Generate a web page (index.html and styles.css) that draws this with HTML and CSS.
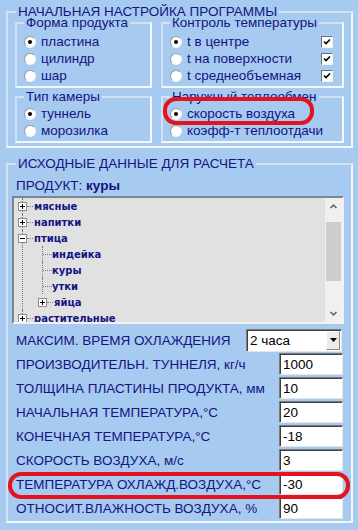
FILE: index.html
```html
<!DOCTYPE html>
<html lang="ru">
<head>
    <meta charset="UTF-8">
    <title>Настройка программы</title>
    <link rel="stylesheet" href="styles.css">
</head>
<body>
<div class="window">

    <fieldset class="group outer">
        <legend>НАЧАЛЬНАЯ НАСТРОЙКА ПРОГРАММЫ</legend>
        <div class="grid">
            <fieldset class="group inner">
                <legend>Форма продукта</legend>
                <div class="opt"><span class="radio on"></span>пластина</div>
                <div class="opt"><span class="radio"></span>цилиндр</div>
                <div class="opt"><span class="radio"></span>шар</div>
            </fieldset>
            <fieldset class="group inner">
                <legend>Контроль температуры</legend>
                <div class="opt"><span class="radio on"></span>t в центре<span class="check"><svg width="8" height="8" viewBox="0 0 8 8"><path d="M1 3.5 L3 5.5 L7 1.5" fill="none" stroke="#000" stroke-width="1.6"/></svg></span></div>
                <div class="opt"><span class="radio"></span>t на поверхности<span class="check"><svg width="8" height="8" viewBox="0 0 8 8"><path d="M1 3.5 L3 5.5 L7 1.5" fill="none" stroke="#000" stroke-width="1.6"/></svg></span></div>
                <div class="opt"><span class="radio"></span>t среднеобъемная<span class="check"><svg width="8" height="8" viewBox="0 0 8 8"><path d="M1 3.5 L3 5.5 L7 1.5" fill="none" stroke="#000" stroke-width="1.6"/></svg></span></div>
            </fieldset>
            <fieldset class="group inner low">
                <legend>Тип камеры</legend>
                <div class="opt"><span class="radio on"></span>туннель</div>
                <div class="opt"><span class="radio"></span>морозилка</div>
            </fieldset>
            <fieldset class="group inner low">
                <legend>Наружный теплообмен</legend>
                <div class="opt"><span class="radio on"></span>скорость воздуха</div>
                <div class="opt"><span class="radio"></span>коэфф-т теплоотдачи</div>
            </fieldset>
        </div>
    </fieldset>

    <fieldset class="group outer data">
        <legend>ИСХОДНЫЕ ДАННЫЕ ДЛЯ РАСЧЕТА</legend>
        <div class="product">ПРОДУКТ: <b>куры</b></div>

        <div class="tree">
            <ul class="roots">
                <li><div class="node"><span class="exp plus"></span><span class="dash"></span>мясные</div></li>
                <li><div class="node"><span class="exp plus"></span><span class="dash"></span>напитки</div></li>
                <li>
                    <div class="node"><span class="exp minus"></span><span class="dash"></span>птица</div>
                    <ul class="kids">
                        <li><div class="node"><span class="dash long"></span>индейка</div></li>
                        <li><div class="node"><span class="dash long"></span>куры</div></li>
                        <li><div class="node"><span class="dash long"></span>утки</div></li>
                        <li class="last"><div class="node"><span class="exp plus"></span><span class="dash"></span>яйца</div></li>
                    </ul>
                </li>
                <li><div class="node"><span class="exp plus"></span><span class="dash"></span>растительные</div></li>
            </ul>
            <div class="scroll">
                <svg class="arrow" width="17" height="17" viewBox="0 0 17 17"><path d="M5.5 10 L8.5 7 L11.5 10" fill="none" stroke="#606060" stroke-width="1.5"/></svg>
                <div class="track"><div class="thumb"></div></div>
                <svg class="arrow" width="17" height="17" viewBox="0 0 17 17"><path d="M5.5 7 L8.5 10 L11.5 7" fill="none" stroke="#606060" stroke-width="1.5"/></svg>
            </div>
        </div>

        <div class="row first">
            <span class="label">МАКСИМ. ВРЕМЯ ОХЛАЖДЕНИЯ</span>
            <div class="combo">2 часа<span class="drop"><svg width="7" height="4" viewBox="0 0 7 4"><path d="M0 0 H7 L3.5 4 Z" fill="#000"/></svg></span></div>
        </div>
        <div class="row"><span class="label">ПРОИЗВОДИТЕЛЬН. ТУННЕЛЯ, кг/ч</span><div class="input">1000</div></div>
        <div class="row"><span class="label">ТОЛЩИНА ПЛАСТИНЫ ПРОДУКТА, мм</span><div class="input">10</div></div>
        <div class="row"><span class="label">НАЧАЛЬНАЯ ТЕМПЕРАТУРА,°C</span><div class="input">20</div></div>
        <div class="row"><span class="label">КОНЕЧНАЯ ТЕМПЕРАТУРА,°C</span><div class="input">-18</div></div>
        <div class="row"><span class="label">СКОРОСТЬ ВОЗДУХА, м/с</span><div class="input">3</div></div>
        <div class="row"><span class="label">ТЕМПЕРАТУРА ОХЛАЖД.ВОЗДУХА,°C</span><div class="input">-30</div></div>
        <div class="row"><span class="label">ОТНОСИТ.ВЛАЖНОСТЬ ВОЗДУХА, %</span><div class="input">90</div></div>
    </fieldset>

    <!-- red marks drawn over the form -->
    <div class="mark mark-air"></div>
    <div class="mark mark-temp"></div>
</div>
</body>
</html>
```

FILE: styles.css
```css
html, body {
    margin: 0;
    background: #a6caf0;
}
body {
    width: 358px;
    height: 530px;
    overflow: hidden;
    font-family: "Liberation Sans", Arial, sans-serif;
    font-size: 13.5px;
    color: #141482;
}
.window {
    position: relative;
    padding: 7px 5px 0 6px;
}

/* group boxes */
.group {
    margin: 0;
    min-width: 0;
    border: 2px solid;
    border-color: #d3e2f2 #f4f8fc #f4f8fc #d3e2f2;
}
.group legend {
    padding: 0 2px;
    line-height: 10px;
}
.outer {
    padding: 0 7px 3px 7px;
}
.outer > legend {
    margin-left: 1px;
}
.inner {
    padding: 5px 7px 2px 7px;
}
.inner.low {
    padding-top: 3px;
}
.grid {
    display: grid;
    grid-template-columns: 137px 183px;
    column-gap: 9px;
    row-gap: 4px;
    margin-top: 1px;
}

.opt {
    display: flex;
    align-items: center;
    height: 17px;
    white-space: nowrap;
}
.radio {
    position: relative;
    flex: none;
    width: 10px;
    height: 10px;
    margin-right: 5px;
    border-radius: 50%;
    background: #fff;
    border: 1px solid;
    border-color: #9a9a9a #f4f4f4 #f4f4f4 #9a9a9a;
}
.radio.on::after {
    content: "";
    position: absolute;
    left: 3px;
    top: 3px;
    width: 4px;
    height: 4px;
    border-radius: 50%;
    background: #000;
}
.check {
    display: flex;
    align-items: center;
    justify-content: center;
    width: 10px;
    height: 10px;
    margin-left: auto;
    margin-right: 2px;
    background: #fff;
    border: 1px solid;
    border-color: #6f6f6f #f4f4f4 #f4f4f4 #6f6f6f;
}

/* second group */
.data {
    margin-top: 11px;
    padding: 0 7px 1px 4px;
}
.data > legend {
    margin-left: 4px;
}
.product {
    margin-top: 9px;
    padding-left: 4px;
    line-height: 16px;
}

.tree {
    display: flex;
    height: 124px;
    margin-top: 2px;
    border: 2px solid;
    border-color: #7d8590 #f2f2f2 #f2f2f2 #7d8590;
    overflow: hidden;
}
.roots {
    flex: 1;
    margin: 0;
    padding: 0 0 0 8px;
    list-style: none;
    background: #e1e1e1;
    font-family: "DejaVu Sans", Verdana, sans-serif;
    font-weight: bold;
    font-size: 10px;
}
.roots ul {
    margin: 0;
    padding: 0;
    list-style: none;
}
.roots > li {
    border-left: 1px dotted #7a7a7a;
}
.kids {
    margin-left: 19px !important;
}
.kids > li {
    border-left: 1px dotted #7a7a7a;
}
.kids > li.last {
    border-left-color: transparent;
}
.node {
    display: flex;
    align-items: center;
    height: 16px;
    white-space: nowrap;
}
.exp {
    position: relative;
    flex: none;
    width: 7px;
    height: 7px;
    margin-left: -5px;
    background: #fff;
    border: 1px solid #8c8c8c;
}
.exp::before {
    content: "";
    position: absolute;
    left: 1px;
    top: 3px;
    width: 5px;
    height: 1px;
    background: #000;
}
.plus::after {
    content: "";
    position: absolute;
    left: 3px;
    top: 1px;
    width: 1px;
    height: 5px;
    background: #000;
}
.dash {
    width: 6px;
    margin-right: 1px;
    border-top: 1px dotted #7a7a7a;
}
.dash.long {
    width: 9px;
    margin-right: 0;
}

.scroll {
    display: flex;
    flex-direction: column;
    width: 17px;
    background: #f0f0f0;
}
.arrow {
    flex: none;
}
.track {
    flex: 1;
    padding-top: 7px;
}
.thumb {
    height: 59px;
    margin: 0 1px;
    background: #cdcdcd;
}

/* parameter rows */
.row {
    display: flex;
    align-items: center;
    justify-content: space-between;
    height: 24px;
    padding-left: 4px;
    white-space: nowrap;
}
.row.first {
    margin-top: 4px;
}
.combo, .input {
    box-sizing: border-box;
    display: flex;
    align-items: center;
    background: #fff;
    color: #000;
    border: 1px solid;
    border-color: #7a7a7a #e6e6e6 #e6e6e6 #7a7a7a;
    box-shadow: inset 1px 1px 0 #404040;
}
.combo {
    width: 96px;
    height: 23px;
    margin-right: 2px;
    padding-left: 3px;
}
.drop {
    display: flex;
    align-items: center;
    justify-content: center;
    width: 14px;
    height: 19px;
    margin-left: auto;
    margin-right: 1px;
    background: #ececec;
    border: 1px solid;
    border-color: #fff #8a8a8a #8a8a8a #fff;
    box-sizing: border-box;
}
.input {
    width: 64px;
    height: 22px;
    margin-right: 1px;
    padding-left: 3px;
}

/* red hand-drawn marks */
.mark {
    position: absolute;
    border: 4px solid #e3131f;
    border-radius: 13px;
}
.mark-air {
    left: 163px;
    top: 97px;
    width: 143px;
    height: 20px;
}
.mark-temp {
    left: 8px;
    top: 472px;
    width: 334px;
    height: 19px;
}
```
